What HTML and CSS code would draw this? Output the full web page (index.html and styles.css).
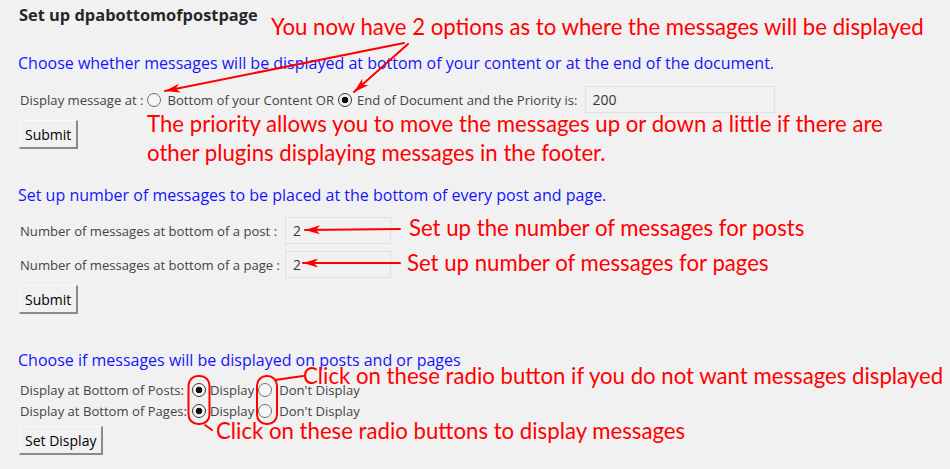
FILE: index.html
```
<!DOCTYPE html>
<html lang="en">
<head>
<meta charset="utf-8">
<title>Set up dpabottomofpostpage</title>
<link rel="stylesheet" href="styles.css">
</head>
<body>
<div class="page">
  <h3 class="title">Set up dpabottomofpostpage</h3>

  <form class="section">
    <p class="lead lead-first">Choose whether messages will be displayed at bottom of your content or at the end of the document.</p>
    <div class="line-field">
      <span class="label">Display message at :</span>
      <input type="radio" name="where" class="radio r-first">
      <span class="opt">Bottom of your Content OR</span>
      <input type="radio" name="where" class="radio r-second" checked>
      <span class="opt">End of Document and the Priority is:</span>
      <input type="text" class="text priority" value="200">
    </div>
    <button type="button" class="btn">Submit</button>
  </form>

  <form class="section">
    <p class="lead">Set up number of messages to be placed at the bottom of every post and page.</p>
    <div class="count-grid">
      <span class="label">Number of messages at bottom of a post :</span>
      <input type="text" class="text count" value="2">
      <span class="label">Number of messages at bottom of a page :</span>
      <input type="text" class="text count" value="2">
    </div>
    <button type="button" class="btn">Submit</button>
  </form>

  <form class="section">
    <p class="lead">Choose if messages will be displayed on posts and or pages</p>
    <div class="display-grid">
      <span class="label">Display at Bottom of Posts:</span>
      <span class="choice">
        <input type="radio" name="posts" class="radio" checked><span class="opt">Display</span>
        <input type="radio" name="posts" class="radio r-dont"><span class="opt">Don't Display</span>
      </span>
      <span class="label">Display at Bottom of Pages:</span>
      <span class="choice">
        <input type="radio" name="pages" class="radio" checked><span class="opt">Display</span>
        <input type="radio" name="pages" class="radio r-dont"><span class="opt">Don't Display</span>
      </span>
    </div>
    <button type="button" class="btn">Set Display</button>
  </form>

  <div class="note note-1">You now have 2 options as to where the messages will be displayed</div>
  <div class="note note-2"><span class="note-line">The priority allows you to move the messages up or down a little if there are</span><span class="note-line note-line-2">other plugins displaying messages in the footer.</span></div>
  <div class="note note-3">Set up the number of messages for posts</div>
  <div class="note note-4">Set up number of messages for pages</div>
  <div class="note note-5">Click on these radio button if you do not want messages displayed</div>
  <div class="note note-6">Click on these radio buttons to display messages</div>

  <svg class="marks" width="950" height="469" viewBox="0 0 950 469" aria-hidden="true">
    <defs>
      <marker id="head" markerUnits="userSpaceOnUse" markerWidth="16" markerHeight="10" refX="15" refY="5" orient="auto">
        <path d="M0,0.5 L15,5 L0,9.5 L4,5 Z" fill="#ff0000"/>
      </marker>
    </defs>
    <g stroke="#ff0000" stroke-width="2" fill="none" stroke-linecap="round">
      <line x1="404" y1="43" x2="165" y2="91" marker-end="url(#head)"/>
      <line x1="408" y1="44" x2="354" y2="92" marker-end="url(#head)"/>
      <line x1="400" y1="229" x2="305" y2="230" marker-end="url(#head)"/>
      <line x1="400" y1="263" x2="303" y2="263" marker-end="url(#head)"/>
      <rect x="188.5" y="376" width="21" height="48" rx="9.5"/>
      <rect x="257" y="376" width="20" height="48" rx="9.5"/>
      <line x1="205" y1="425" x2="212" y2="430"/>
      <line x1="275" y1="380" x2="303" y2="376"/>
    </g>
  </svg>
</div>
</body>
</html>
```
FILE: styles.css
```
html, body {
  margin: 0;
  padding: 0;
}

body {
  background: #f1f1f1;
  font-family: "Open Sans", "Liberation Sans", sans-serif;
  color: #444444;
}

.page {
  position: relative;
  width: 950px;
  height: 469px;
  padding-left: 18px;
  box-sizing: border-box;
  overflow: hidden;
}

.title {
  margin: 0 0 0 1px;
  padding-top: 5px;
  font-size: 16.4px;
  line-height: 20px;
  font-weight: 700;
  color: #23282d;
}

.section {
  margin: 0;
  display: flex;
  flex-direction: column;
  align-items: flex-start;
}

.lead {
  margin: 35px 0 0 0;
  font-size: 16px;
  line-height: 22px;
  color: #1414ff;
}

.lead-first {
  margin-top: 27px;
}

.label {
  font-size: 13.1px;
  line-height: 16px;
  color: #444444;
  margin-left: 2px;
}

.opt {
  font-size: 13.1px;
  line-height: 16px;
  color: #444444;
}

.line-field {
  margin-top: 12px;
  height: 27px;
  display: flex;
  align-items: center;
}

.radio {
  appearance: none;
  -webkit-appearance: none;
  margin: 0;
  width: 14px;
  height: 14px;
  border: 1px solid #6f6f6f;
  border-radius: 50%;
  background: #f6f6f6;
  box-sizing: border-box;
  flex: none;
}

.radio:checked {
  border-color: #333333;
  background: radial-gradient(circle at center, #111111 0 3px, #f6f6f6 3.6px);
}

.r-first {
  margin: 0 6px 0 4px;
}

.r-second {
  margin: 0 5px 0 4px;
}

.text {
  box-sizing: border-box;
  height: 27px;
  margin: 0;
  padding: 0 7px;
  border: 1px dotted #cfcfcf;
  background: #f1f1f1;
  font-family: "Open Sans", "Liberation Sans", sans-serif;
  font-size: 14px;
  color: #32373c;
  outline: none;
}

.priority {
  width: 190px;
  margin-left: 7px;
}

.count {
  width: 106px;
}

.btn {
  margin-top: 7px;
  margin-left: 1px;
  height: 29px;
  padding: 0 5px;
  box-sizing: border-box;
  border-style: solid;
  border-width: 1px 2px 2px 1px;
  border-color: #fafafa #8a8a8a #8a8a8a #fafafa;
  background: #f1f1f1;
  font-family: "Open Sans", "Liberation Sans", sans-serif;
  font-size: 14px;
  color: #000000;
  border-radius: 0;
}

.count-grid {
  margin-top: 11px;
  display: grid;
  grid-template-columns: 267px 106px;
  grid-auto-rows: 27px;
  row-gap: 7px;
  align-items: center;
}

.display-grid {
  margin-top: 8px;
  display: grid;
  grid-template-columns: 174px auto;
  grid-auto-rows: 21px;
  align-items: center;
}

.display-grid + .btn {
  margin-top: 5px;
}

.choice {
  display: flex;
  align-items: center;
}

.choice .radio {
  margin-right: 4px;
}

.choice .r-dont {
  margin-left: 4px;
  margin-right: 7px;
}

.note {
  position: absolute;
  font-family: Lato, "Open Sans", sans-serif;
  font-size: 22.2px;
  line-height: 16px;
  color: #ff0000;
  white-space: nowrap;
}

.note-line {
  display: block;
}

.note-line-2 {
  margin-top: 13px;
}

.note-1 { left: 271px; top: 19px; }
.note-2 { left: 147px; top: 116px; }
.note-3 { left: 409px; top: 220px; }
.note-4 { left: 407px; top: 255px; }
.note-5 { left: 303px; top: 368px; }
.note-6 { left: 216px; top: 423px; }

.marks {
  position: absolute;
  left: 0;
  top: 0;
  pointer-events: none;
}
```
